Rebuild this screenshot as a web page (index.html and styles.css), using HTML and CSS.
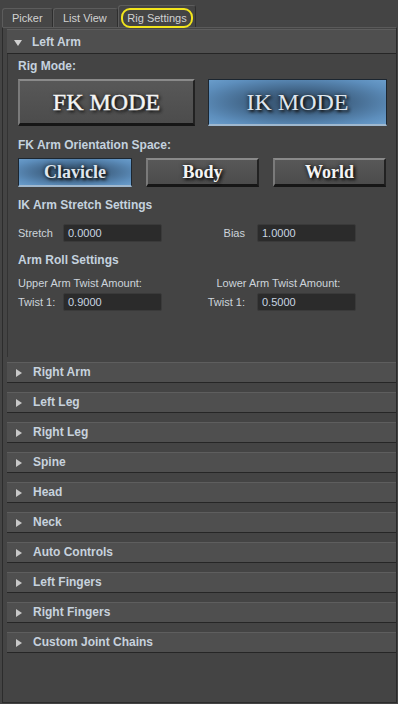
FILE: index.html
```html
<!DOCTYPE html>
<html lang="en">
<head>
  <meta charset="UTF-8">
  <meta name="viewport" content="width=device-width, initial-scale=1.0">
  <link rel="stylesheet" href="styles.css">
</head>
<body>

<div class="tabs">
  <div class="tab picker">Picker</div>
  <div class="tab list">List View</div>
  <div class="tab active"><span class="ring">Rig Settings</span></div>
</div>

<div class="panel">
  <!-- expanded frame -->
  <div class="frame open">
    <div class="frame-head"><span class="arrow-down"></span>Left Arm</div>
    <div class="frame-body">
      <div class="heading">Rig Mode:</div>
      <div class="mode-row">
        <div class="btn big grey">FK MODE</div>
        <div class="btn big blue">IK MODE</div>
      </div>

      <div class="heading gap12">FK Arm Orientation Space:</div>
      <div class="space-row">
        <div class="btn small blue">Clavicle</div>
        <div class="btn small grey">Body</div>
        <div class="btn small grey">World</div>
      </div>

      <div class="heading gap11">IK Arm Stretch Settings</div>
      <div class="field-row gap12">
        <div class="field left">
          <span class="lbl">Stretch</span>
          <span class="input">0.0000</span>
        </div>
        <div class="field right">
          <span class="lbl">Bias</span>
          <span class="input">1.0000</span>
        </div>
      </div>

      <div class="heading gap11">Arm Roll Settings</div>
      <div class="sub-row">
        <div class="sub left">Upper Arm Twist Amount:</div>
        <div class="sub right">Lower Arm Twist Amount:</div>
      </div>
      <div class="field-row gap3">
        <div class="field left">
          <span class="lbl">Twist 1:</span>
          <span class="input">0.9000</span>
        </div>
        <div class="field right">
          <span class="lbl">Twist 1:</span>
          <span class="input">0.5000</span>
        </div>
      </div>
    </div>
  </div>

  <div class="frame"><div class="frame-head"><span class="arrow-right"></span>Right Arm</div></div>
  <div class="frame"><div class="frame-head"><span class="arrow-right"></span>Left Leg</div></div>
  <div class="frame"><div class="frame-head"><span class="arrow-right"></span>Right Leg</div></div>
  <div class="frame"><div class="frame-head"><span class="arrow-right"></span>Spine</div></div>
  <div class="frame"><div class="frame-head"><span class="arrow-right"></span>Head</div></div>
  <div class="frame"><div class="frame-head"><span class="arrow-right"></span>Neck</div></div>
  <div class="frame"><div class="frame-head"><span class="arrow-right"></span>Auto Controls</div></div>
  <div class="frame"><div class="frame-head"><span class="arrow-right"></span>Left Fingers</div></div>
  <div class="frame"><div class="frame-head"><span class="arrow-right"></span>Right Fingers</div></div>
  <div class="frame"><div class="frame-head"><span class="arrow-right"></span>Custom Joint Chains</div></div>
</div>

</body>
</html>
```

FILE: styles.css
```css
body {
  margin: 0;
  width: 398px;
  height: 704px;
  background-color: #444444;
  font-family: "Liberation Sans", Arial, sans-serif;
  font-size: 11px;
  color: #cfd5db;
  overflow: hidden;
}

/* tab strip */
.tabs {
  display: flex;
  align-items: flex-end;
  height: 27px;
  padding-left: 2px;
  box-sizing: border-box;
}

.tab {
  box-sizing: border-box;
  height: 19px;
  line-height: 18px;
  padding-left: 9px;
  color: #d2d2d2;
  background-color: #464646;
  border-top: 1px solid #5c5c5c;
  border-left: 1px solid #5c5c5c;
  border-right: 1px solid #2e2e2e;
  border-radius: 3px 3px 0 0;
  white-space: nowrap;
}

.tab.picker { width: 51px; }
.tab.list { width: 65px; }

.tab.active {
  width: 78px;
  height: 22px;
  padding-left: 2px;
  background-color: #444444;
  display: flex;
  align-items: flex-end;
}

.ring {
  display: block;
  box-sizing: border-box;
  width: 72px;
  height: 20px;
  line-height: 16px;
  text-align: center;
  border: 2px solid #f2e51c;
  border-radius: 9px;
  margin-bottom: -1px;
}

/* main panel */
.panel {
  height: 676px;
  margin-left: 2px;
  width: 395px;
  box-sizing: border-box;
  border: 1px solid #2c2c2c;
  border-top-color: #5a5a5a;
  padding: 1px 0 0 4px;
  display: flex;
  flex-direction: column;
}

.frame-head {
  height: 19px;
  line-height: 19px;
  background-color: #4f4f4f;
  border-top: 1px solid #5e5e5e;
  border-bottom: 1px solid #262626;
  font-size: 12px;
  font-weight: bold;
  color: #c7d2dd;
  display: flex;
  align-items: center;
}

.frame.open .frame-head {
  height: 21px;
  padding-top: 2px;
}

.frame + .frame {
  margin-top: 9px;
}

.frame.open + .frame {
  margin-top: 5px;
}

.arrow-right {
  width: 0;
  height: 0;
  margin: 0 11px 0 9px;
  border-top: 4px solid transparent;
  border-bottom: 4px solid transparent;
  border-left: 6px solid #c8c8c8;
}

.arrow-down {
  width: 0;
  height: 0;
  margin: 0 10px 0 7px;
  border-left: 4px solid transparent;
  border-right: 4px solid transparent;
  border-top: 6px solid #d0d0d0;
}

.frame-body {
  height: 303px;
  box-sizing: border-box;
  padding: 5px 0 0 10px;
  border-left: 1px solid #333333;
}

.heading {
  height: 14px;
  line-height: 14px;
  font-size: 12px;
  font-weight: bold;
  color: #c4d2df;
}

.gap12 { margin-top: 12px; }
.gap11 { margin-top: 11px; }
.gap3 { margin-top: 3px; }

/* buttons */
.btn {
  box-sizing: border-box;
  display: flex;
  align-items: center;
  justify-content: center;
  font-family: "Liberation Serif", "Times New Roman", serif;
  text-shadow: 2px 2px 3px #111111, 0 0 4px #1a1a1a;
}

.btn.grey {
  background: linear-gradient(#585858, #4c4c4c);
  border-top: 2px solid #8a8a8a;
  border-left: 2px solid #7a7a7a;
  border-right: 2px solid #222222;
  border-bottom: 3px solid #161616;
  color: #f4f4f4;
}

.btn.blue {
  background: radial-gradient(ellipse at center, #344e68 0%, #426689 40%, #5d8ebc 80%, #6a9dcb 100%);
  border: 1px solid #1c2630;
  border-bottom: 2px solid #9fb8cf;
  color: #dfe6ee;
}

.mode-row {
  display: flex;
  gap: 13px;
  margin-top: 6px;
}

.btn.big {
  height: 47px;
  width: 177px;
  font-size: 24px;
}

.btn.big.grey {
  -webkit-text-stroke: 0.4px #f4f4f4;
}

.btn.big.blue {
  width: 179px;
}

.space-row {
  display: flex;
  gap: 14px;
  margin-top: 6px;
}

.btn.small {
  height: 29px;
  width: 114px;
  font-size: 18px;
  font-weight: bold;
}

.btn.small + .btn.small {
  width: 113px;
}

/* number fields */
.field-row {
  display: flex;
}

.field {
  display: flex;
  align-items: center;
  width: 190px;
}

.field .lbl {
  flex-shrink: 0;
  white-space: nowrap;
  color: #cdd4db;
}

.field.left .lbl {
  width: 45px;
}

.field.right .lbl {
  width: 38px;
  text-align: right;
  margin-right: 12px;
}

.input {
  flex-shrink: 0;
  box-sizing: border-box;
  width: 99px;
  height: 18px;
  line-height: 16px;
  padding-left: 4px;
  background-color: #2b2b2b;
  border: 1px solid #3a3a3a;
  border-radius: 2px;
  color: #c9d6e2;
}

.sub-row {
  display: flex;
  margin-top: 9px;
  height: 14px;
  line-height: 14px;
}

.sub {
  width: 190px;
  color: #cdd4db;
}

.sub.right {
  padding-left: 19px;
}
```
